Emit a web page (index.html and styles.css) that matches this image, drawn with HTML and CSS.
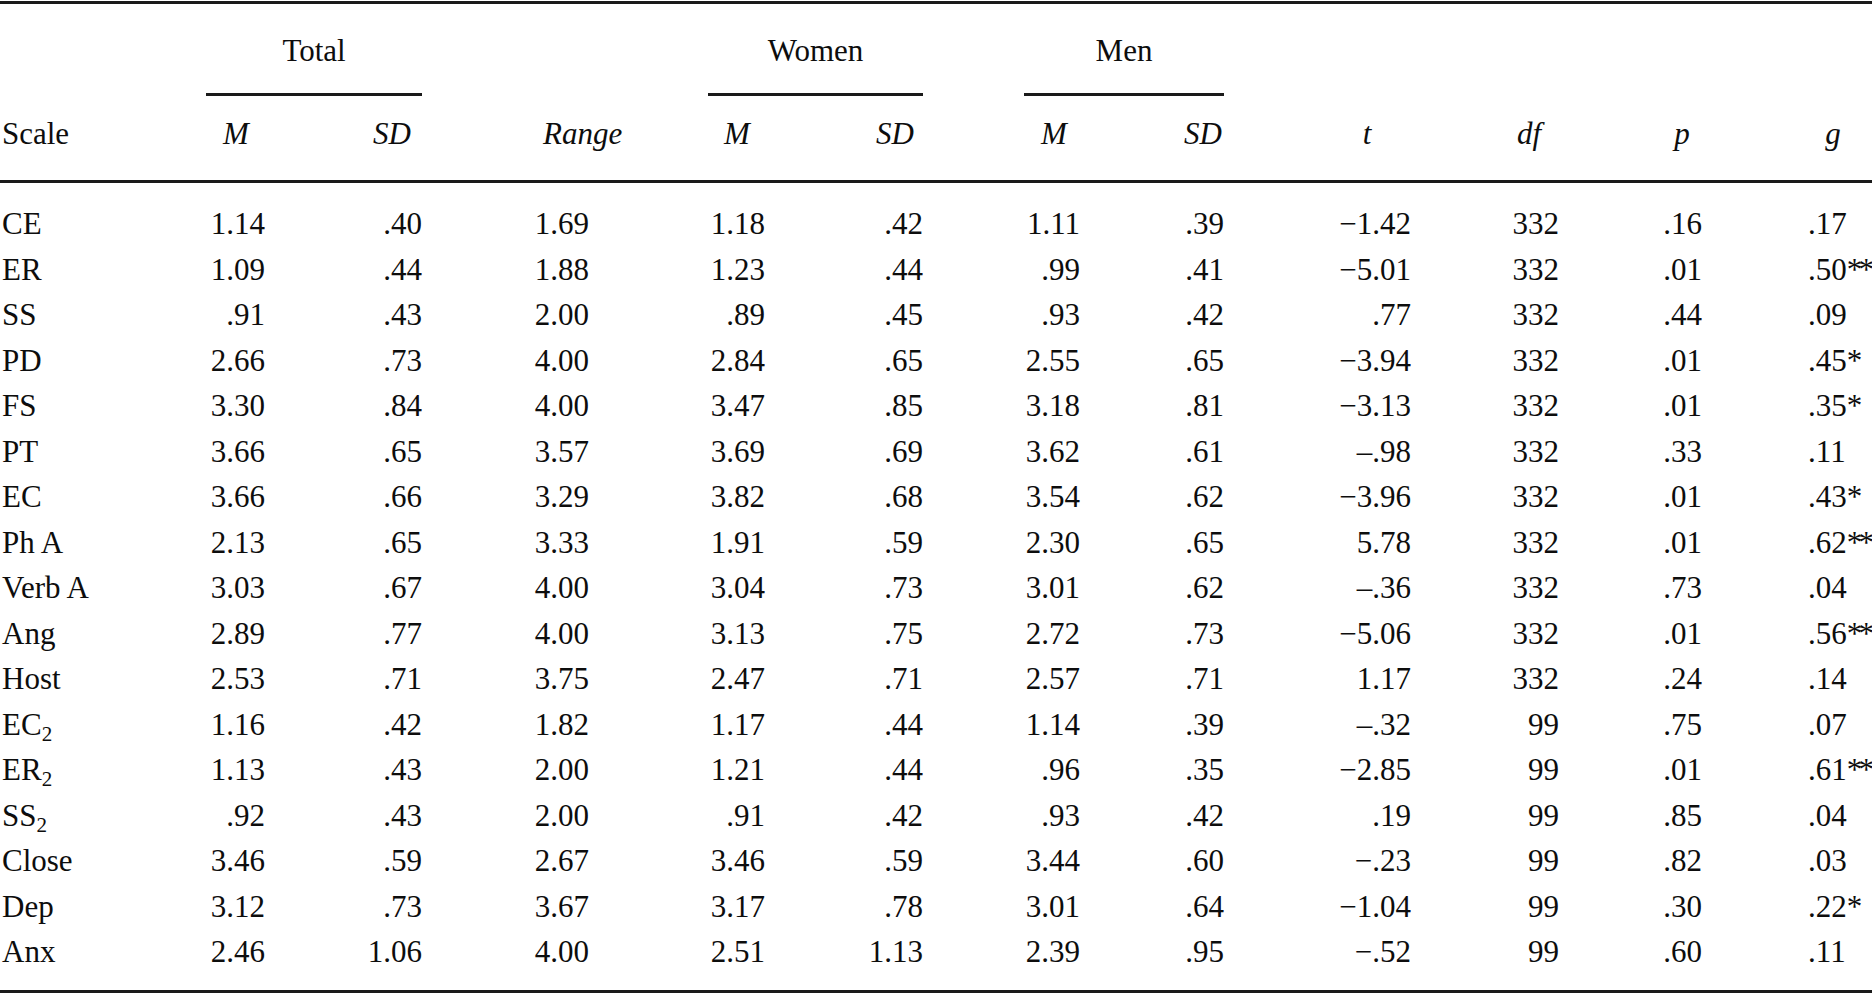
FILE: index.html
```html
<!DOCTYPE html>
<html lang="en">
<head>
<meta charset="utf-8">
<title>Scale descriptives by gender</title>
<link rel="stylesheet" href="styles.css">
</head>
<body>
<div class="frame">
<table class="stats">
<colgroup>
<col class="w-scale"><col class="w-tm"><col class="w-tsd"><col class="w-range"><col class="w-wm"><col class="w-wsd"><col class="w-mm"><col class="w-msd"><col class="w-t"><col class="w-df"><col class="w-p"><col class="w-g">
</colgroup>
<thead>
<tr class="spanners">
<th></th>
<th colspan="2"><div class="span-label span-total">Total</div></th>
<th></th>
<th colspan="2"><div class="span-label span-women">Women</div></th>
<th colspan="2"><div class="span-label span-men">Men</div></th>
<th></th><th></th><th></th><th></th>
</tr>
<tr class="heads">
<th class="h-scale">Scale</th>
<th class="h-tm"><i>M</i></th>
<th class="h-tsd"><i>SD</i></th>
<th class="h-range"><i>Range</i></th>
<th class="h-wm"><i>M</i></th>
<th class="h-wsd"><i>SD</i></th>
<th class="h-mm"><i>M</i></th>
<th class="h-msd"><i>SD</i></th>
<th class="h-t"><i>t</i></th>
<th class="h-df"><i>df</i></th>
<th class="h-p"><i>p</i></th>
<th class="h-g"><i>g</i></th>
</tr>
</thead>
<tbody>
<tr><td>CE</td><td>1.14</td><td>.40</td><td>1.69</td><td>1.18</td><td>.42</td><td>1.11</td><td>.39</td><td>&minus;1.42</td><td>332</td><td>.16</td><td>.17</td></tr>
<tr><td>ER</td><td>1.09</td><td>.44</td><td>1.88</td><td>1.23</td><td>.44</td><td>.99</td><td>.41</td><td>&minus;5.01</td><td>332</td><td>.01</td><td>.50<span class="sig">**</span></td></tr>
<tr><td>SS</td><td>.91</td><td>.43</td><td>2.00</td><td>.89</td><td>.45</td><td>.93</td><td>.42</td><td>.77</td><td>332</td><td>.44</td><td>.09</td></tr>
<tr><td>PD</td><td>2.66</td><td>.73</td><td>4.00</td><td>2.84</td><td>.65</td><td>2.55</td><td>.65</td><td>&minus;3.94</td><td>332</td><td>.01</td><td>.45<span class="sig">*</span></td></tr>
<tr><td>FS</td><td>3.30</td><td>.84</td><td>4.00</td><td>3.47</td><td>.85</td><td>3.18</td><td>.81</td><td>&minus;3.13</td><td>332</td><td>.01</td><td>.35<span class="sig">*</span></td></tr>
<tr><td>PT</td><td>3.66</td><td>.65</td><td>3.57</td><td>3.69</td><td>.69</td><td>3.62</td><td>.61</td><td>&ndash;.98</td><td>332</td><td>.33</td><td>.11</td></tr>
<tr><td>EC</td><td>3.66</td><td>.66</td><td>3.29</td><td>3.82</td><td>.68</td><td>3.54</td><td>.62</td><td>&minus;3.96</td><td>332</td><td>.01</td><td>.43<span class="sig">*</span></td></tr>
<tr><td>Ph A</td><td>2.13</td><td>.65</td><td>3.33</td><td>1.91</td><td>.59</td><td>2.30</td><td>.65</td><td>5.78</td><td>332</td><td>.01</td><td>.62<span class="sig">**</span></td></tr>
<tr><td>Verb A</td><td>3.03</td><td>.67</td><td>4.00</td><td>3.04</td><td>.73</td><td>3.01</td><td>.62</td><td>&ndash;.36</td><td>332</td><td>.73</td><td>.04</td></tr>
<tr><td>Ang</td><td>2.89</td><td>.77</td><td>4.00</td><td>3.13</td><td>.75</td><td>2.72</td><td>.73</td><td>&minus;5.06</td><td>332</td><td>.01</td><td>.56<span class="sig">**</span></td></tr>
<tr><td>Host</td><td>2.53</td><td>.71</td><td>3.75</td><td>2.47</td><td>.71</td><td>2.57</td><td>.71</td><td>1.17</td><td>332</td><td>.24</td><td>.14</td></tr>
<tr><td>EC<sub>2</sub></td><td>1.16</td><td>.42</td><td>1.82</td><td>1.17</td><td>.44</td><td>1.14</td><td>.39</td><td>&ndash;.32</td><td>99</td><td>.75</td><td>.07</td></tr>
<tr><td>ER<sub>2</sub></td><td>1.13</td><td>.43</td><td>2.00</td><td>1.21</td><td>.44</td><td>.96</td><td>.35</td><td>&minus;2.85</td><td>99</td><td>.01</td><td>.61<span class="sig">**</span></td></tr>
<tr><td>SS<sub>2</sub></td><td>.92</td><td>.43</td><td>2.00</td><td>.91</td><td>.42</td><td>.93</td><td>.42</td><td>.19</td><td>99</td><td>.85</td><td>.04</td></tr>
<tr><td>Close</td><td>3.46</td><td>.59</td><td>2.67</td><td>3.46</td><td>.59</td><td>3.44</td><td>.60</td><td>&minus;.23</td><td>99</td><td>.82</td><td>.03</td></tr>
<tr><td>Dep</td><td>3.12</td><td>.73</td><td>3.67</td><td>3.17</td><td>.78</td><td>3.01</td><td>.64</td><td>&minus;1.04</td><td>99</td><td>.30</td><td>.22<span class="sig">*</span></td></tr>
<tr><td>Anx</td><td>2.46</td><td>1.06</td><td>4.00</td><td>2.51</td><td>1.13</td><td>2.39</td><td>.95</td><td>&minus;.52</td><td>99</td><td>.60</td><td>.11</td></tr>
</tbody>
</table>
</div>
</body>
</html>
```

FILE: styles.css
```css
html, body {
  margin: 0;
  padding: 0;
  background: #ffffff;
}

body {
  font-family: "Liberation Serif", "Times New Roman", serif;
  font-size: 31px;
  color: #0d0d0d;
  width: 1872px;
  overflow: hidden;
}

.frame {
  margin-top: 1px;
  border-top: 3px solid #1a1a1a;
  border-bottom: 3px solid #1a1a1a;
  width: 1872px;
}

.stats {
  width: 1872px;
  table-layout: fixed;
  border-collapse: separate;
  border-spacing: 0;
}

.w-scale { width: 170px; }
.w-tm { width: 95px; }
.w-tsd { width: 157px; }
.w-range { width: 167px; }
.w-wm { width: 176px; }
.w-wsd { width: 158px; }
.w-mm { width: 157px; }
.w-msd { width: 144px; }
.w-t { width: 187px; }
.w-df { width: 148px; }
.w-p { width: 143px; }
.w-g { width: 170px; }

.stats th,
.stats td {
  padding: 0;
  font-weight: normal;
  white-space: nowrap;
  overflow: visible;
}

.stats i {
  font-style: italic;
}

/* spanner row */
.spanners th {
  padding-top: 27px;
  line-height: 40px;
  text-align: center;
  vertical-align: top;
}

.span-label {
  padding-bottom: 22px;
  border-bottom: 3px solid #1a1a1a;
  text-align: center;
}

.span-total { margin-left: 36px; }
.span-women { margin-left: 119px; }
.span-men { margin-left: 101px; }

/* column heads */
.heads th {
  padding-top: 18px;
  padding-bottom: 26px;
  line-height: 40px;
  text-align: center;
  border-bottom: 3px solid #1a1a1a;
}

.heads .h-scale { text-align: left; padding-left: 2px; }
.heads .h-tm { padding-left: 37px; }
.heads .h-tsd { padding-left: 97px; }
.heads .h-range { padding-left: 121px; }
.heads .h-wm { padding-left: 120px; }
.heads .h-wsd { padding-left: 102px; }
.heads .h-mm { padding-left: 105px; }
.heads .h-msd { padding-left: 102px; }
.heads .h-t { padding-left: 99px; }
.heads .h-df { padding-left: 88px; }
.heads .h-p { padding-left: 103px; }
.heads .h-g { padding-left: 92px; }

/* body */
.stats tbody td {
  line-height: 45.5px;
  text-align: right;
}

.stats tbody td:first-child {
  text-align: left;
  padding-left: 2px;
}

.stats tbody td:last-child {
  text-align: left;
  padding-left: 106px;
}

.stats tbody tr:first-child td {
  padding-top: 18px;
}

.stats tbody tr:last-child td {
  padding-bottom: 15px;
}

.stats sub {
  font-size: 0.68em;
  line-height: 0;
  vertical-align: -0.28em;
}

.sig {
  font-size: 1em;
  line-height: 0;
  letter-spacing: -0.12em;
}
```
